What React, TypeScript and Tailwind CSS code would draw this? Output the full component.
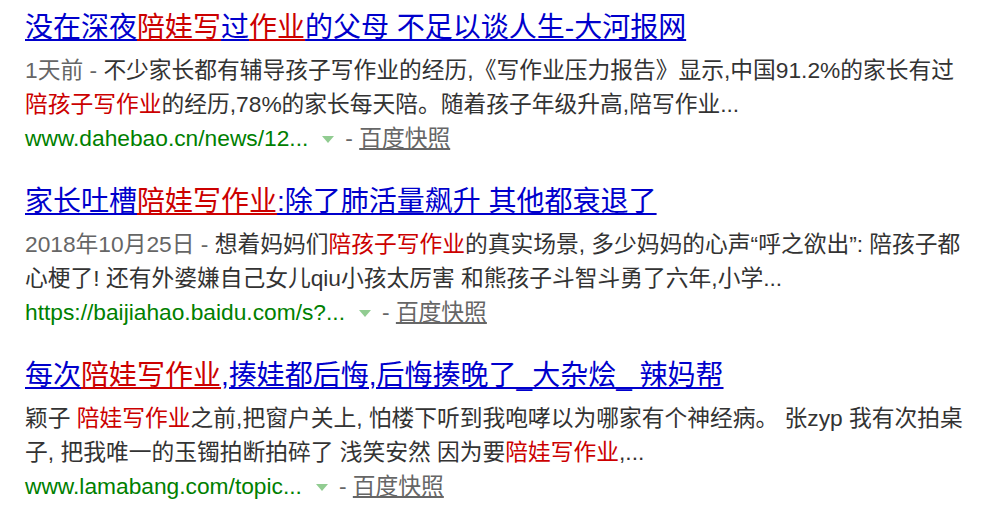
import React from "react";

// one piece of text; hl = keyword highlighted in red
type Seg = { t: string; hl?: boolean };

interface Result {
  title: Seg[];
  date?: string;
  lines: Seg[][];
  url: string;
}

const RESULTS: Result[] = [
  {
    title: [
      { t: "没在深夜" },
      { t: "陪娃写", hl: true },
      { t: "过" },
      { t: "作业", hl: true },
      { t: "的父母 不足以谈人生-大河报网" },
    ],
    date: "1天前 - ",
    lines: [
      [{ t: "不少家长都有辅导孩子写作业的经历,《写作业压力报告》显示,中国91.2%的家长有过" }],
      [
        { t: "陪孩子写作业", hl: true },
        { t: "的经历,78%的家长每天陪。随着孩子年级升高,陪写作业..." },
      ],
    ],
    url: "www.dahebao.cn/news/12...",
  },
  {
    title: [
      { t: "家长吐槽" },
      { t: "陪娃写作业", hl: true },
      { t: ":除了肺活量飙升 其他都衰退了" },
    ],
    date: "2018年10月25日 - ",
    lines: [
      [
        { t: "想着妈妈们" },
        { t: "陪孩子写作业", hl: true },
        { t: "的真实场景, 多少妈妈的心声“呼之欲出”: 陪孩子都" },
      ],
      [{ t: "心梗了! 还有外婆嫌自己女儿qiu小孩太厉害 和熊孩子斗智斗勇了六年,小学..." }],
    ],
    url: "https://baijiahao.baidu.com/s?...",
  },
  {
    title: [
      { t: "每次" },
      { t: "陪娃写作业", hl: true },
      { t: ",揍娃都后悔,后悔揍晚了_大杂烩_ 辣妈帮" },
    ],
    lines: [
      [
        { t: "颖子 " },
        { t: "陪娃写作业", hl: true },
        { t: "之前,把窗户关上, 怕楼下听到我咆哮以为哪家有个神经病。 张zyp 我有次拍桌" },
      ],
      [
        { t: "子, 把我唯一的玉镯拍断拍碎了 浅笑安然 因为要" },
        { t: "陪娃写作业", hl: true },
        { t: ",..." },
      ],
    ],
    url: "www.lamabang.com/topic...",
  },
];

function TriangleDown() {
  return (
    <svg
      width="12"
      height="7"
      viewBox="0 0 12 7"
      className="inline-block align-middle ml-[14px] mr-[11px]"
    >
      <polygon points="0,0 12,0 6,7" fill="#91cc91" />
    </svg>
  );
}

function ResultItem({ item }: { item: Result }) {
  return (
    <div className="mb-[30px]">
      <h3 className="text-[28px] leading-[34px] whitespace-nowrap">
        <a href="#">
          {item.title.map((s, i) => (
            <span
              key={i}
              className={s.hl ? "text-[#cc0000] underline" : "text-[#0000cc] underline"}
            >
              {s.t}
            </span>
          ))}
        </a>
      </h3>

      <div className="mt-2 text-[22.75px] leading-[34px] text-[#333333]">
        {item.lines.map((line, li) => (
          <div key={li} className="whitespace-nowrap">
            {li === 0 && item.date && <span className="text-[#666666]">{item.date}</span>}
            {line.map((s, i) => (
              <span key={i} className={s.hl ? "text-[#cc0000]" : ""}>
                {s.t}
              </span>
            ))}
          </div>
        ))}
        <div className="whitespace-nowrap">
          <a href="#" className="text-[#008000]">
            {item.url}
          </a>
          <TriangleDown />
          <span className="text-[#666666]">- </span>
          <a href="#" className="text-[#666666] underline">
            百度快照
          </a>
        </div>
      </div>
    </div>
  );
}

export default function App() {
  return (
    <div className="w-[987px] h-[514px] overflow-hidden bg-white pl-[25px] pt-[11px] font-['Liberation_Sans','Noto_Sans_CJK_SC',sans-serif]">
      {RESULTS.map((r, i) => (
        <ResultItem key={i} item={r} />
      ))}
    </div>
  );
}
